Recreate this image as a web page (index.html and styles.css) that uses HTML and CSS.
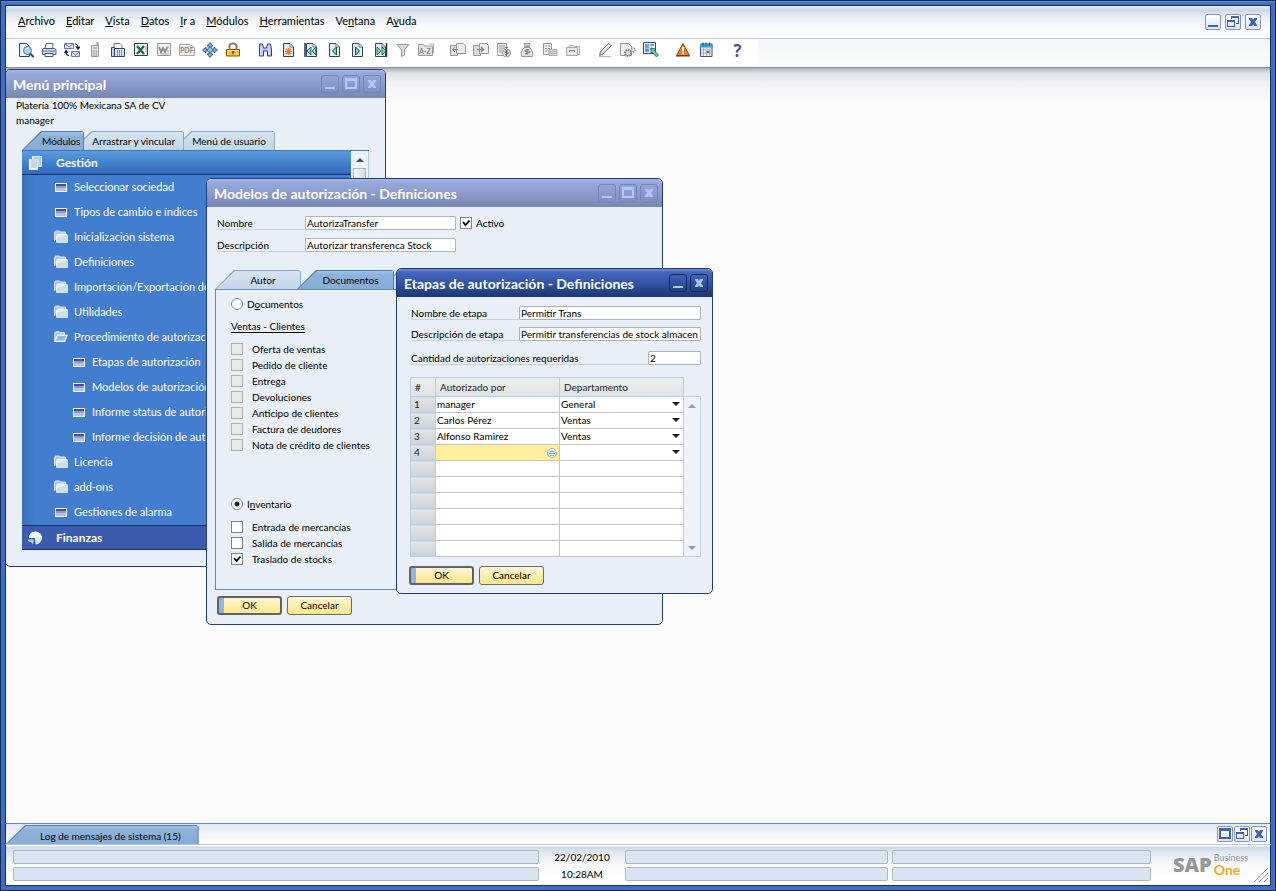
FILE: index.html
```
<!DOCTYPE html>
<html lang="es">
<head>
  <meta charset="UTF-8">
  <meta name="viewport" content="width=device-width, initial-scale=1.0">
  <title>SAP Business One</title>
  <link rel="stylesheet" href="styles.css">
</head>
<body>
  <!-- shared icons -->
  <svg class="sprite" aria-hidden="true">
    <symbol id="i-min" viewBox="0 0 14 14"><path d="M2 10h10v2H2z" fill="currentColor"/></symbol>
    <symbol id="i-max" viewBox="0 0 14 14"><path d="M1 1h12v11H1z M3 4v6h8V4z" fill="currentColor" fill-rule="evenodd"/></symbol>
    <symbol id="i-restore" viewBox="0 0 14 14"><path d="M5 1h8v8h-3V8h2V3H6v1H5z M1 5h8v7H1z M2 7v4h6V7z" fill="currentColor" fill-rule="evenodd"/></symbol>
    <symbol id="i-close" viewBox="0 0 14 14"><path d="M3 3h3l1 2 1-2h3v1L9 7l2 3v1H8L7 9l-1 2H3v-1l2-3-2-3z" fill="currentColor"/></symbol>
    <symbol id="i-form" viewBox="0 0 14 14"><path d="M1 3h12v9H1z" fill="#f4f7fc"/><path d="M2 4h10v2H2z" fill="#3d4f9e"/><path d="M2 6h10v5H2z" fill="#b9c2dc"/><path d="M2 6h10v2H2z" fill="#8f9cc9"/></symbol>
    <symbol id="i-folder" viewBox="0 0 14 14"><path d="M.5 11V2l1-1h4l1 1h5v2" fill="#a9c6ea" stroke="#d9e6f5"/><path d="M2.5 12.500V5l1-1h9l1 1v7.500z" fill="#e3edf5" stroke="#fff" stroke-width=".6"/><path d="M3 12V8l10-3v7z" fill="#cddfe9"/></symbol>
    <symbol id="i-folder-open" viewBox="0 0 16 14"><path d="M1 12V2l1-1h4l1 1h5v3" fill="#a9c6ea" stroke="#fff"/><path d="M1 12l3-7h11l-3 7z" fill="#8fb9ec" stroke="#fff" stroke-width="1.4"/></symbol>
    <symbol id="i-doc" viewBox="0 0 16 16"><path d="M3.5 1.5h6.500l3.500 3.500v9.500h-10z" fill="#dcedf6" stroke="#34425f"/><path d="M10 2v3h3" fill="#fff" stroke="#34425f" stroke-width=".7"/></symbol>
  </svg>

  <header class="header">
    <div class="menu-row">
      <nav class="menubar">
        <a href="#"><u>A</u>rchivo</a>
        <a href="#"><u>E</u>ditar</a>
        <a href="#"><u>V</u>ista</a>
        <a href="#"><u>D</u>atos</a>
        <a href="#"><u>I</u>r a</a>
        <a href="#"><u>M</u>ódulos</a>
        <a href="#"><u>H</u>erramientas</a>
        <a href="#">Ve<u>n</u>tana</a>
        <a href="#">A<u>y</u>uda</a>
      </nav>
      <div class="mdi-buttons">
        <button aria-label="Minimizar"><svg><use href="#i-min"/></svg></button>
        <button aria-label="Restaurar"><svg><use href="#i-restore"/></svg></button>
        <button aria-label="Cerrar"><svg><use href="#i-close"/></svg></button>
      </div>
    </div>
    <div class="toolbar">
      <div class="tools">
        <button aria-label="Vista previa"><svg viewBox="0 0 16 16"><path d="M1.5 1.5h7l3 3v10h-10z" fill="#e4f1f8" stroke="#34425f"/><circle cx="9.5" cy="8.5" r="4" fill="#a5d5e6" stroke="#5d7d96"/><path d="M7.5 7.5l3-2" stroke="#fff"/><path d="M12 11.5l3.500 3.500" stroke="#34425f" stroke-width="2"/></svg></button>
        <button aria-label="Imprimir"><svg viewBox="0 0 16 16"><path d="M4 7l1-5.500h7L11.500 7" fill="#f4faff" stroke="#5b6b94"/><path d="M1.500 7.500l1-1h11l1.500 1v5h-13.500z" fill="#cfdcf0" stroke="#4a587b"/><path d="M2 9h12" stroke="#67759a"/><path d="M4 11.500h8v3H4z" fill="#f7fbff" stroke="#4a587b"/></svg></button>
        <button aria-label="Enviar"><svg viewBox="0 0 16 16"><path d="M.5 1.500h9v5h-9zM7.500 9.500h8v5h-8z" fill="#dfe6ff" stroke="#6f73bd"/><path d="M1 2l4 3 4-3M8 10l3.500 3 3.500-3" fill="none" stroke="#6f73bd"/><path d="M11 2q3 0 3 4M12 4.500l2 2.500 2-2.500M5 13.500q-3 0-3-4M.5 11l1.500-2.500L4 11" fill="none" stroke="#111" stroke-width="1.2"/></svg></button>
        <button aria-label="SMS"><svg viewBox="0 0 16 16"><path d="M4.500 3.500h7v11h-7z" fill="#e2e2e2" stroke="#999"/><path d="M10.500 0v4" stroke="#999" stroke-width="2"/><path d="M6 5h4v2H6z" fill="#bbb"/><path d="M6 9h4M6 11h4M6 13h4" stroke="#888" stroke-dasharray="1 .5"/></svg></button>
        <button aria-label="Fax"><svg viewBox="0 0 16 16"><path d="M4 6V1.500h6l2 2V6" fill="#fff" stroke="#5b6b94"/><path d="M1.500 5.500h3v9h-3z" fill="#c5d0f0" stroke="#34426f"/><path d="M4.500 6.500h10v8h-10z" fill="#dce5fa" stroke="#34426f"/><path d="M7 9h6M7 11h6M7 13h6" stroke="#34426f" stroke-dasharray="1 1"/></svg></button>
        <button aria-label="Excel"><svg viewBox="0 0 16 16"><path d="M1.500 1.500h13v12h-13z" fill="#f1faf0" stroke="#27404c"/><path d="M4 4l7 8M11 4l-7 8" stroke="#27683c" stroke-width="2.4"/><path d="M12 4h2M12 6h2M12 8h2M12 10h2" stroke="#94bd9e"/></svg></button>
        <button aria-label="Word"><svg viewBox="0 0 16 16"><path d="M1.500 1.500h13v12h-13z" fill="#f1f1f1" stroke="#999"/><path d="M3 5l2 5 2-4 2 4 2.500-5" fill="none" stroke="#888" stroke-width="1.8"/><path d="M11 5h2M11 9h2M5 12h8" stroke="#aaa"/></svg></button>
        <button aria-label="PDF"><svg viewBox="0 0 16 16"><path d="M.5 2.500h11l4 3v8H.5z" fill="#ededed" stroke="#aaa"/><text x="1" y="11" class="glyph">PDF</text></svg></button>
        <button aria-label="Iniciar aplicación"><svg viewBox="0 0 16 16"><path d="M8 .5l3 3.500H9v3h3V5l3.500 3-3.500 3V9H9v3h2l-3 3.500L5 12h2V9H4v2L.5 8 4 5v2h3V4H5z" fill="#83a8e0" stroke="#1e3d78" stroke-width=".8"/><path d="M8 5l3 3-3 3-3-3z" fill="#7ad1be" stroke="#29586b" stroke-width=".6"/></svg></button>
        <button aria-label="Bloquear"><svg viewBox="0 0 16 16"><path d="M4.500 7V4q0-2.500 3.500-2.500T11.500 4v3" fill="none" stroke="#8a8560" stroke-width="2"/><path d="M1.500 7.500h13v6.500h-13z" fill="#ffc62e" stroke="#7e510c"/><path d="M2 8.500h12" stroke="#ffeb9a"/><path d="M8 9v3.500M6.500 10h3" stroke="#5c3c05"/></svg></button>
      </div>
      <div class="tools">
        <button aria-label="Buscar"><svg viewBox="0 0 16 16"><path d="M2.500 2h3l1 4h3l1-4h3l1 6v6h-4V9h-4v5h-4V8z" fill="#b9c3fa" stroke="#393c70"/><path d="M4 4v9M12 4v9" stroke="#eef"/></svg></button>
        <button aria-label="Crear"><svg viewBox="0 0 16 16"><use href="#i-doc"/><path d="M8.500 6v7M5 9.500h7M6 7l5 5M11 7l-5 5" stroke="#f07323" stroke-width="1.2"/></svg></button>
        <button aria-label="Primero"><svg viewBox="0 0 16 16"><use href="#i-doc"/><path d="M2 1v14" stroke="#26334f" stroke-width="1.5"/><path d="M8 5v8L4 9zM13 5v8L9 9z" fill="#7dddab" stroke="#1e4a4a" stroke-width=".8"/></svg></button>
        <button aria-label="Anterior"><svg viewBox="0 0 16 16"><use href="#i-doc"/><path d="M10.500 5v8l-4-4z" fill="#7dddab" stroke="#1e4a4a"/></svg></button>
        <button aria-label="Siguiente"><svg viewBox="0 0 16 16"><use href="#i-doc"/><path d="M6.500 5v8l4-4z" fill="#7dddab" stroke="#1e4a4a"/></svg></button>
        <button aria-label="Último"><svg viewBox="0 0 16 16"><use href="#i-doc"/><path d="M14.500 1v14" stroke="#26334f" stroke-width="1.5"/><path d="M5 5v8l4-4zM10 5v8l4-4z" fill="#7dddab" stroke="#1e4a4a" stroke-width=".8"/></svg></button>
        <button aria-label="Filtrar"><svg viewBox="0 0 16 16"><path d="M2 2.500h12L9.500 8v5l-3 1.500V8z" fill="#d9d9d9" stroke="#999"/></svg></button>
        <button aria-label="Clasificar"><svg viewBox="0 0 16 16"><path d="M.5 13.500v-11h5l1 1.500h8v9.500z" fill="#e3e3e3" stroke="#999"/><path d="M11 2h4.500v9" fill="none" stroke="#aaa"/><text x="1" y="12" class="glyph">A-Z</text></svg></button>
      </div>
      <div class="tools">
        <button aria-label="Documento base"><svg viewBox="0 0 16 16"><path d="M.5 3.500h7v10h-7z" fill="#ddd" stroke="#999"/><path d="M6.500 1.500h7l2 2v8h-9z" fill="#ececec" stroke="#999"/><path d="M8 7.500H3M5 5L2.500 7.500 5 10" fill="none" stroke="#888"/></svg></button>
        <button aria-label="Documento destino"><svg viewBox="0 0 16 16"><path d="M.5 3.500h7v10h-7z" fill="#ddd" stroke="#999"/><path d="M6.500 1.500h7l2 2v8h-9z" fill="#ececec" stroke="#999"/><path d="M4 7.500h6M8 5l2.500 2.500L8 10" fill="none" stroke="#888" stroke-width="1.5"/></svg></button>
        <button aria-label="Ganancia bruta"><svg viewBox="0 0 16 16"><path d="M1.500 1.500h9v12h-9z" fill="#eee" stroke="#999"/><path d="M3 4h6M3 6h6M3 8h4M3 10h3" stroke="#999"/><circle cx="10.500" cy="11" r="4" fill="#ddd" stroke="#999"/><path d="M12 9q-3-1-3 .8t3 1.200-3 2M10.500 8v6M9 5.500h3" fill="none" stroke="#777"/></svg></button>
        <button aria-label="Medios de pago"><svg viewBox="0 0 16 16"><path d="M6 4h4l1-2.500H5zM6 5q-5 4-3.500 9.500h11Q15 9 10 5z" fill="#e2e2e2" stroke="#999"/><path d="M10 8q-4-1-4 .8t4 1.200-4 2M8 7v6M5 5h6" fill="none" stroke="#777"/></svg></button>
        <button aria-label="Cálculo de volumen"><svg viewBox="0 0 16 16"><path d="M1.500 1.500h8v11h-8z" fill="#eee" stroke="#999"/><path d="M3 4h5M3 6.500h5M3 9h5" stroke="#999" stroke-dasharray="2 1"/><path d="M7 7.500h8v6H7zM7 9.500h8M7 11.500h8" fill="#ddd" stroke="#aaa"/></svg></button>
        <button aria-label="Diario"><svg viewBox="0 0 16 16"><path d="M3.500 5l1-1.500h4l1 1h5v8h-2" fill="#eee" stroke="#aaa"/><path d="M1.500 5.500h11v8h-11z" fill="#e6e6e6" stroke="#aaa"/><path d="M4.500 10V8.500h5V10" fill="none" stroke="#888"/></svg></button>
      </div>
      <div class="tools">
        <button aria-label="Diseño"><svg viewBox="0 0 16 16"><path d="M2.500 13.500l1-4 8-8 3 2-8.500 8.500z" fill="#ddd" stroke="#777"/><path d="M5 10l7-7" stroke="#fff"/><path d="M2 14.500h12" stroke="#bbb" stroke-width="1.5"/></svg></button>
        <button aria-label="Parametrizaciones"><svg viewBox="0 0 16 16"><path d="M.5 1.500h8l3 3v9H.5z" fill="#eee" stroke="#999"/><circle cx="8" cy="11" r="3" fill="#ddd" stroke="#888" stroke-width="2" stroke-dasharray="1.5 .8"/><circle cx="13" cy="8" r="2" fill="#eee" stroke="#888" stroke-width="1.5" stroke-dasharray="1 .6"/></svg></button>
        <button aria-label="Gestor de consultas"><svg viewBox="0 0 16 16"><path d="M.5.5h12v11H.5z" fill="#eaf5ff" stroke="#254f80"/><path d="M2 3h4M2 5h4M2 9h4M7 3h4M7 7h2" stroke="#4f88c4" stroke-width="1.3"/><path d="M2 6.500h4v2H2z" fill="#4f88c4"/><path d="M8 6l5 1-1.500 1.500 4 4.500-2 2-4-4.500L8 12z" fill="#69cb90" stroke="#245b4b" stroke-width=".8"/></svg></button>
      </div>
      <div class="tools">
        <button aria-label="Alertas"><svg viewBox="0 0 16 16"><path d="M8 1.500l6.500 12h-13z" fill="#ee8216" stroke="#9c3d0a" stroke-linejoin="round"/><path d="M8 5v4.500M8 10.500v1.800" stroke="#fff" stroke-width="2"/><path d="M1 14h14" stroke="#343c57"/></svg></button>
        <button aria-label="Calendario"><svg viewBox="0 0 16 16"><path d="M2.500 2h11.500v12.500H2.500z" fill="#e8eefa" stroke="#455079"/><path d="M2 2.500h12.500v3H2z" fill="#24a7e6"/><path d="M5 .5v3M8 .5v3M11.500.5v3" stroke="#293460"/><path d="M3 8h11M3 11h11M5.500 6v8M8.500 6v8M11.500 6v8" stroke="#a5b1d2"/><path d="M8.500 9h3v2h-3z" fill="#e8442d"/></svg></button>
      </div>
      <div class="tools">
        <button aria-label="Ayuda" class="help">?</button>
      </div>
      <div class="toolbar-rest"></div>
    </div>
  </header>

  <main class="desktop">
    <section class="window main-menu">
      <div class="titlebar">
        <h2>Menú principal</h2>
        <button aria-label="Minimizar"><svg><use href="#i-min"/></svg></button>
        <button aria-label="Maximizar"><svg><use href="#i-max"/></svg></button>
        <button aria-label="Cerrar"><svg><use href="#i-close"/></svg></button>
      </div>
      <div class="window-body">
        <p class="company">Platería 100% Mexicana SA de CV<br>manager</p>
        <div class="tabs">
          <button class="tab active">Módulos</button>
          <button class="tab">Arrastrar y vincular</button>
          <button class="tab">Menú de usuario</button>
        </div>
        <div class="module-panel">
          <div class="modules">
            <a href="#" class="module open"><svg viewBox="0 0 14 14"><path d="M4 0h10v11H4z" fill="#dbe9f3"/><path d="M1 3h9v11H1z" fill="#f4f8fa" stroke="#a9c3dc" stroke-width=".6"/><path d="M3 5h6M3 7h6M3 9h6M3 11h6M6 2h7M11 4h2M11 6h2M11 8h2" stroke="#86a8c7" stroke-width=".8"/></svg>Gestión</a>
            <ul>
              <li><a href="#"><svg><use href="#i-form"/></svg>Seleccionar sociedad</a></li>
              <li><a href="#"><svg><use href="#i-form"/></svg>Tipos de cambio e índices</a></li>
              <li><a href="#"><svg><use href="#i-folder"/></svg>Inicialización sistema</a></li>
              <li><a href="#"><svg><use href="#i-folder"/></svg>Definiciones</a></li>
              <li><a href="#"><svg><use href="#i-folder"/></svg>Importación/Exportación de datos</a></li>
              <li><a href="#"><svg><use href="#i-folder"/></svg>Utilidades</a></li>
              <li><a href="#"><svg><use href="#i-folder-open"/></svg>Procedimiento de autorización</a></li>
              <li class="sub"><a href="#"><svg><use href="#i-form"/></svg>Etapas de autorización</a></li>
              <li class="sub"><a href="#"><svg><use href="#i-form"/></svg>Modelos de autorización</a></li>
              <li class="sub"><a href="#"><svg><use href="#i-form"/></svg>Informe status de autorización</a></li>
              <li class="sub"><a href="#"><svg><use href="#i-form"/></svg>Informe decisión de autorización</a></li>
              <li><a href="#"><svg><use href="#i-folder"/></svg>Licencia</a></li>
              <li><a href="#"><svg><use href="#i-folder"/></svg>add-ons</a></li>
              <li><a href="#"><svg><use href="#i-form"/></svg>Gestiones de alarma</a></li>
            </ul>
            <a href="#" class="module"><svg viewBox="0 0 14 14"><path d="M7 7H1a6.500 6.500 0 1 1 6.500 6.500z" fill="#dce9f3"/><path d="M7 7l6.500-1A6.500 6.500 0 0 0 1 5v2z" fill="#f3f8fb"/><path d="M0 8.500h6l-1 5-1.500-2L0 10z" fill="#b4cbe4"/></svg>Finanzas</a>
          </div>
          <div class="scrollbar">
            <span class="arrow up"></span>
            <span class="thumb"></span>
          </div>
        </div>
      </div>
    </section>

    <section class="window models">
      <div class="titlebar">
        <h2>Modelos de autorización - Definiciones</h2>
        <button aria-label="Minimizar"><svg><use href="#i-min"/></svg></button>
        <button aria-label="Maximizar"><svg><use href="#i-max"/></svg></button>
        <button aria-label="Cerrar"><svg><use href="#i-close"/></svg></button>
      </div>
      <div class="window-body">
        <div class="field">
          <label for="model-name">Nombre</label>
          <input type="text" id="model-name" value="AutorizaTransfer">
          <label class="check"><input type="checkbox" checked>Activo</label>
        </div>
        <div class="field">
          <label for="model-desc">Descripción</label>
          <input type="text" id="model-desc" value="Autorizar transferenca Stock">
        </div>
        <div class="tabs">
          <button class="tab">Autor</button>
          <button class="tab active">Documentos</button>
          <button class="tab" aria-label="Etapas"></button>
        </div>
        <div class="tab-panel">
          <label class="check radio"><input type="radio" name="doc-type"><span>D<u>o</u>cumentos</span></label>
          <h3>Ventas - Clientes</h3>
          <div class="check-list">
            <label class="check"><input type="checkbox" disabled>Oferta de ventas</label>
            <label class="check"><input type="checkbox" disabled>Pedido de cliente</label>
            <label class="check"><input type="checkbox" disabled>Entrega</label>
            <label class="check"><input type="checkbox" disabled>Devoluciones</label>
            <label class="check"><input type="checkbox" disabled>Anticipo de clientes</label>
            <label class="check"><input type="checkbox" disabled>Factura de deudores</label>
            <label class="check"><input type="checkbox" disabled>Nota de crédito de clientes</label>
          </div>
          <label class="check radio inventory"><input type="radio" name="doc-type" checked><span>I<u>n</u>ventario</span></label>
          <div class="check-list">
            <label class="check"><input type="checkbox">Entrada de mercancías</label>
            <label class="check"><input type="checkbox">Salida de mercancías</label>
            <label class="check"><input type="checkbox" checked>Traslado de stocks</label>
          </div>
        </div>
        <div class="actions">
          <button class="btn default">OK</button>
          <button class="btn">Cancelar</button>
        </div>
      </div>
    </section>

    <section class="window stages focused">
      <div class="titlebar">
        <h2>Etapas de autorización - Definiciones</h2>
        <button aria-label="Minimizar"><svg><use href="#i-min"/></svg></button>
        <button aria-label="Cerrar"><svg><use href="#i-close"/></svg></button>
      </div>
      <div class="window-body">
        <div class="field">
          <label for="stage-name">Nombre de etapa</label>
          <input type="text" id="stage-name" value="Permitir Trans">
        </div>
        <div class="field">
          <label for="stage-desc">Descripción de etapa</label>
          <input type="text" id="stage-desc" value="Permitir transferencias de stock almacen">
        </div>
        <div class="field amount">
          <label for="stage-count">Cantidad de autorizaciones requeridas</label>
          <input type="text" id="stage-count" value="2">
        </div>
        <div class="grid">
          <table>
            <thead>
              <tr><th class="num">#</th><th>Autorizado por</th><th>Departamento</th></tr>
            </thead>
            <tbody>
              <tr><td>1</td><td>manager</td><td><select aria-label="Departamento 1"><option>General</option></select></td></tr>
              <tr><td>2</td><td>Carlos Pérez</td><td><select aria-label="Departamento 2"><option>Ventas</option></select></td></tr>
              <tr><td>3</td><td>Alfonso Ramirez</td><td><select aria-label="Departamento 3"><option>Ventas</option></select></td></tr>
              <tr><td>4</td><td class="editing"><div><input type="text" aria-label="Autorizado por 4"><svg viewBox="0 0 10 10"><circle cx="5" cy="5" r="4.500" fill="#e3eef8" stroke="#9db3c8"/><path d="M2.500 3.500h5M2 5.500h6M3 7.500h4" stroke="#7e97b5" stroke-width=".8"/></svg></div></td><td><select aria-label="Departamento 4"><option></option></select></td></tr>
              <tr><td></td><td></td><td></td></tr>
              <tr><td></td><td></td><td></td></tr>
              <tr><td></td><td></td><td></td></tr>
              <tr><td></td><td></td><td></td></tr>
              <tr><td></td><td></td><td></td></tr>
              <tr><td></td><td></td><td></td></tr>
            </tbody>
          </table>
          <div class="scrollbar idle">
            <span class="arrow up"></span>
            <span class="arrow down"></span>
          </div>
        </div>
        <div class="actions">
          <button class="btn default">OK</button>
          <button class="btn">Cancelar</button>
        </div>
      </div>
    </section>
  </main>

  <div class="logbar">
    <button class="tab active">Log de mensajes de sistema (15)</button>
    <div class="mdi-buttons">
      <button aria-label="Maximizar"><svg><use href="#i-max"/></svg></button>
      <button aria-label="Restaurar"><svg><use href="#i-restore"/></svg></button>
      <button aria-label="Cerrar"><svg><use href="#i-close"/></svg></button>
    </div>
  </div>

  <footer class="statusbar">
    <div class="status-grid">
      <span class="slot"></span><time>22/02/2010</time><span class="slot"></span><span class="slot"></span>
      <span class="slot"></span><time>10:28AM</time><span class="slot"></span><span class="slot"></span>
    </div>
    <div class="logo">
      <b>SAP</b>
      <div>
        <span>Business</span>
        <strong>One</strong>
      </div>
    </div>
    <svg class="grip" viewBox="0 0 14 14"><path d="M0 14L14 0M5 14l9-9M10 14l4-4" stroke="#8a9bbd"/></svg>
  </footer>
</body>
</html>
```
FILE: styles.css
```
* {
  box-sizing: border-box;
}
body {
  margin: 0;
  height: 100vh;
  display: flex;
  flex-direction: column;
  border: 1px solid #142c5c;
  padding: 4px;
  background: linear-gradient(#6f9fe4, #3f6fbe 3px, #3f6fbe);
  font: 10px/16px Lato, "Noto Sans", sans-serif;
  color: #000;
  overflow: hidden;
}
a {
  color: inherit;
  text-decoration: none;
}
u {
  text-decoration-skip-ink: none;
  text-underline-offset: 1px;
}
button, input, select {
  font: inherit;
  color: inherit;
  margin: 0;
  padding: 0;
  border: 0;
  background: none;
}
h2, h3, p, ul {
  margin: 0;
  padding: 0;
}
.sprite {
  display: none;
}

/* header */
.header {
  flex: none;
  border: 1px solid #17305f;
  border-bottom: 1px solid #858d9b;
  background: #fff;
}
.menu-row {
  display: flex;
  justify-content: space-between;
  align-items: center;
  height: 33px;
  padding: 0 9px 0 12px;
  background: linear-gradient(#e8eef6, #c9d6e9 4px, #dfe6ef 8px, #f6f8fb 18px, #fff);
  border-bottom: 1px solid #bcc6d9;
}
.menubar {
  display: flex;
  gap: 11px;
  padding-bottom: 2px;
  font-size: 11px;
}
.mdi-buttons {
  display: flex;
  gap: 4px;
}
.mdi-buttons button {
  width: 16px;
  height: 16px;
  border: 1px solid #8496bd;
  border-radius: 2px;
  background: linear-gradient(#fff, #dfe6f1);
  color: #3f62ae;
}
.mdi-buttons svg, .titlebar svg {
  display: block;
  width: 14px;
  height: 14px;
}
.toolbar {
  display: flex;
  gap: 9px;
  height: 28px;
  padding-left: 8px;
}
.tools {
  display: flex;
}
.tools button {
  width: 23px;
  height: 22px;
  display: flex;
  align-items: center;
  justify-content: center;
}
.tools svg {
  width: 16px;
  height: 16px;
}
.glyph {
  font: bold 7px Lato, sans-serif;
  fill: #888;
}
.tools .help {
  font: bold 17px "Open Sans", sans-serif;
  color: #56537f;
}
.toolbar-rest {
  flex: 1;
  background: linear-gradient(#f1f4f9, #fdfdfe);
}

/* desktop and windows */
.desktop {
  flex: 1;
  position: relative;
  min-height: 0;
  overflow: hidden;
  background: linear-gradient(#a9b0b9, #dde1e6 5px, #eef1f5 14px, #fcfcfc 36px);
  border: 1px solid #17305f;
  border-width: 0 1px;
}
.window {
  position: absolute;
  display: flex;
  flex-direction: column;
  border: 1px solid #213c78;
  border-radius: 5px;
  background: #e8eff6;
  overflow: hidden;
}
.main-menu {
  left: -1px;
  top: 1px;
  width: 381px;
  height: 498px;
}
.models {
  left: 200px;
  top: 110px;
  width: 457px;
  height: 447px;
}
.stages {
  left: 390px;
  top: 200px;
  width: 317px;
  height: 326px;
}
.titlebar {
  display: flex;
  align-items: center;
  gap: 3px;
  height: 28px;
  padding: 0 4px 0 7px;
  background: linear-gradient(#a9b9e6, #98a9dc 3px, #8b9bcb 14px, #7787b2);
  color: #fff;
}
.titlebar h2 {
  flex: 1;
  padding-top: 2px;
  font-size: 14px;
  font-weight: bold;
}
.titlebar button {
  width: 18px;
  height: 18px;
  padding: 1px;
  border: 1px solid #7484b4;
  border-radius: 3px;
  color: #b2c6ff;
}
.focused .titlebar {
  background: linear-gradient(#6f8dd6, #4468c0 3px, #3455a3 14px, #1b3574);
}
.focused .titlebar button {
  border-color: #13285e;
  background: linear-gradient(#3e63b9, #23407f);
  color: #a9c4fb;
}

/* tabs */
.tabs {
  display: flex;
  height: 19px;
}
.tab {
  position: relative;
  isolation: isolate;
  height: 19px;
  padding: 1px 4px 0 20px;
  background: #85a8cc;
  clip-path: polygon(19px 0, calc(100% - 2px) 0, 100% 2px, 100% 100%, 0 100%);
  white-space: nowrap;
}
.tab::before {
  content: "";
  position: absolute;
  z-index: -1;
  inset: 1px 1px 0;
  background: linear-gradient(#d5e4f1, #c2d6e8);
  clip-path: polygon(19px 0, 100% 0, 100% 100%, 0 100%);
}
.tab.active {
  z-index: 2;
  background: #4f7fb3;
}
.tab.active::before {
  background: linear-gradient(#a3c3e6, #8db2dc 4px, #86acd7);
}

/* main menu */
.main-menu .window-body {
  padding: 0 16px;
}
.company {
  margin-left: -6px;
  line-height: 15px;
}
.main-menu .tabs {
  margin-top: 3px;
}
.main-menu .tab + .tab {
  margin-left: -12px;
  padding-right: 9px;
}
.main-menu .tab:nth-child(2) {
  z-index: 1;
}
.module-panel {
  display: flex;
  border-top: 1px solid #4177b5;
}
.modules {
  flex: 1;
  min-width: 0;
  background: linear-gradient(90deg, #376fc0, #437dcf 12px);
  color: #fff;
}
.module {
  display: flex;
  align-items: center;
  gap: 14px;
  height: 25px;
  padding-left: 6px;
  border-top: 1px solid #1a2f66;
  border-bottom: 1px solid #1a2f66;
  background: #3b5bad;
  font-size: 12px;
  font-weight: bold;
}
.module svg {
  width: 14px;
  height: 14px;
}
.module.open {
  height: 24px;
  border-top: 0;
  background: linear-gradient(#5b9bdd, #4283cd 50%, #3268b8);
}
.modules ul {
  list-style: none;
}
.modules li {
  height: 25px;
  padding-left: 32px;
  font-size: 11px;
}
.modules li.sub {
  padding-left: 50px;
}
.modules li a {
  display: flex;
  align-items: center;
  gap: 6px;
  height: 24px;
  white-space: nowrap;
}
.modules li svg {
  flex: none;
  width: 14px;
  height: 14px;
}
.scrollbar {
  display: flex;
  flex-direction: column;
  width: 18px;
  padding: 0 2px;
  background: #edf3f9;
  border-right: 1px solid #b3cfe8;
}
.arrow {
  height: 17px;
  display: flex;
  align-items: center;
  justify-content: center;
}
.arrow::after {
  content: "";
  border: 4px solid transparent;
  border-top-width: 0;
  border-bottom-color: #3a4862;
}
.arrow.down::after {
  border-width: 4px 4px 0;
  border-color: #8e98a8 transparent transparent;
}
.thumb {
  height: 60px;
  border: 1px solid #a9b5c6;
  background: linear-gradient(90deg, #f5f8fb, #d5dee9);
}
.scrollbar.idle {
  justify-content: space-between;
  width: 17px;
  margin-top: 19px;
  border: 1px solid #b9d2e6;
  border-left: 0;
}
.idle .up::after {
  border-bottom-color: #8e98a8;
}

/* forms */
.field {
  display: flex;
  align-items: center;
  height: 14px;
  margin-bottom: 8px;
}
.field > label:first-child {
  width: 88px;
  height: 14px;
  line-height: 14px;
  border-bottom: 1px solid #c8d1d9;
}
.field input[type="text"] {
  width: 151px;
  height: 14px;
  padding: 0 1px;
  border: 1px solid #aeb4ba;
  border-radius: 1px;
  background: #fff;
}
.check {
  display: flex;
  align-items: center;
  gap: 9px;
  height: 16px;
}
.check input {
  flex: none;
  appearance: none;
  width: 12px;
  height: 12px;
  border: 1px solid #7e8388;
  background: #fff;
}
.check input:checked {
  background: #fff url("data:image/svg+xml,%3Csvg xmlns='http://www.w3.org/2000/svg' viewBox='0 0 10 10'%3E%3Cpath d='M2 4l2.500 3L8.500 2.500' fill='none' stroke='%23000' stroke-width='1.800'/%3E%3C/svg%3E");
}
.check input:disabled {
  border-color: #b0b0b0;
  background: #e9e9e9;
}
.check.radio {
  gap: 4px;
}
.check input[type="radio"] {
  border-radius: 50%;
  border-color: #8d9196;
}
.check input[type="radio"]:checked {
  background: radial-gradient(#223 2px, #fff 3px);
}

.models .window-body {
  padding: 9px 8px 0;
}
.models .field {
  padding-left: 2px;
}
.field .check {
  gap: 4px;
  margin-left: 4px;
}
.models .tabs {
  margin-top: 18px;
}
.models .tab {
  width: 86px;
  padding-left: 14px;
}
.models .tab.active {
  width: 97px;
  margin-left: -4px;
}
.models .tab.active + .tab {
  margin-left: -14px;
}
.tab-panel {
  height: 301px;
  padding: 6px 15px;
  border: 1px solid #5f8fbd;
}
.tab-panel h3 {
  margin-top: 6px;
  font-size: 10px;
  font-weight: normal;
  text-decoration: underline;
  text-underline-offset: 2px;
  text-decoration-skip-ink: none;
}
.check-list {
  margin-top: 7px;
}
.inventory {
  margin-top: 43px;
}
.actions {
  display: flex;
  gap: 5px;
  padding-left: 2px;
  margin-top: 6px;
}
.btn {
  width: 65px;
  height: 19px;
  border: 1px solid #6e6a62;
  border-radius: 3px;
  background: linear-gradient(#fff6dc, #ffefaa 50%, #fbe592);
  line-height: 15px;
}
.btn.default {
  border: 2px solid #66635f;
  background: linear-gradient(90deg, #8fb4e2 5px, transparent 5px), linear-gradient(#fff6dc, #ffefaa 50%, #fbe592);
}

/* authorization stages */
.stages .window-body {
  padding: 9px 11px 0 14px;
}
.stages .field {
  margin-bottom: 7px;
}
.stages .field > label:first-child {
  width: 108px;
}
.stages .field input {
  flex: 1;
  min-width: 0;
}
.stages .amount {
  margin: 10px 0 12px;
}
.stages .amount > label:first-child {
  flex: 1;
}
.stages .amount input {
  flex: none;
  width: 53px;
}
.grid {
  display: flex;
  margin-left: -1px;
}
table {
  width: 100%;
  table-layout: fixed;
  border-collapse: collapse;
  border: 1px solid #b4d0e8;
  background: #fff;
}
th, td {
  height: 16px;
  padding: 0 1px;
  border: 1px solid #c4c5bc;
  line-height: 15px;
  text-align: left;
}
th {
  height: 19px;
  padding-left: 4px;
  border-color: #b4d0e8;
  background: linear-gradient(#eceff2, #dfe2e5);
  font-weight: normal;
  color: #222;
}
.num {
  width: 25px;
}
td:first-child {
  padding-left: 3px;
  border-color: #b4d0e8;
  background: linear-gradient(#dfe3e7, #cdd2d8);
  color: #222;
}
td select {
  display: block;
  appearance: none;
  width: 100%;
  height: 15px;
  background: url("data:image/svg+xml,%3Csvg xmlns='http://www.w3.org/2000/svg' viewBox='0 0 8 4'%3E%3Cpath d='M0 0h8L4 4z' fill='%231a1a2a'/%3E%3C/svg%3E") no-repeat right 2px top 5px / 8px 4px;
}
.editing {
  background: #ffee9c;
}
.editing div {
  display: flex;
  align-items: center;
  height: 15px;
}
.editing input {
  flex: 1;
  min-width: 0;
  height: 15px;
}
.editing svg {
  width: 10px;
  height: 10px;
  margin-right: 1px;
}
.scrollbar {
  flex: none;
}
.stages .actions {
  margin-top: 9px;
  padding: 0;
  margin-left: -2px;
}

/* log bar */
.logbar {
  flex: none;
  display: flex;
  justify-content: space-between;
  align-items: flex-end;
  height: 22px;
  padding-right: 3px;
  border: 1px solid #17305f;
  border-top-color: #6288b8;
  border-bottom-color: #bcc6d9;
  background: linear-gradient(#dfe7f1, #f3f6fa 10px, #fdfdfe);
}
.logbar .tab {
  padding: 2px 18px 0 34px;
}
.logbar .mdi-buttons {
  gap: 1px;
  margin-bottom: 2px;
}

/* status bar */
.statusbar {
  flex: none;
  display: flex;
  align-items: center;
  height: 41px;
  padding: 0 2px 0 7px;
  border: 1px solid #17305f;
  border-top: 0;
  background: linear-gradient(#fff 1px, #c9d6e9 2px, #e3eaf3 8px, #f8fafc 20px, #fff);
}
.status-grid {
  flex: 1;
  display: grid;
  grid-template-columns: 526fr 78px 263fr 259fr;
  column-gap: 4px;
  row-gap: 3px;
  align-items: center;
}
.slot {
  height: 14px;
  border: 1px solid #b1b7bd;
  border-radius: 2px;
  background: #d8e4f2;
}
time {
  line-height: 14px;
  text-align: center;
}
.logo {
  display: flex;
  align-items: center;
  gap: 2px;
  width: 103px;
  padding-left: 22px;
  color: #979797;
}
.logo b {
  font: 800 20px/24px "Open Sans", sans-serif;
}
.logo div {
  display: flex;
  flex-direction: column;
}
.logo span {
  font-size: 9px;
  line-height: 10px;
}
.logo strong {
  font-size: 14px;
  line-height: 14px;
  color: #eca81f;
}
.grip {
  align-self: flex-end;
  width: 14px;
  height: 14px;
  margin-bottom: 3px;
}
```
